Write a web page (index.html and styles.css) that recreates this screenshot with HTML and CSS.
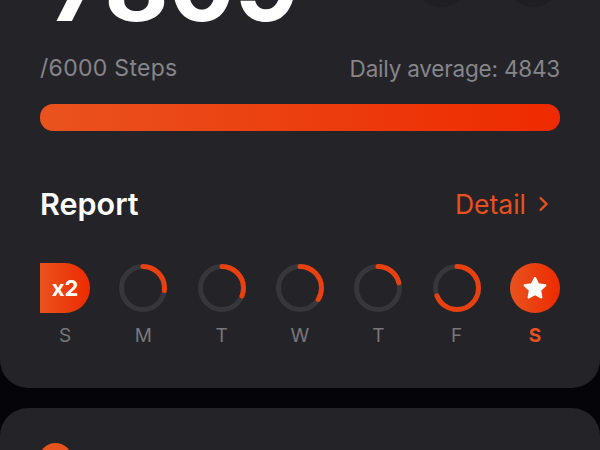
FILE: index.html
```html
<!DOCTYPE html>
<html lang="en">
<head>
    <meta charset="UTF-8">
    <title>Steps</title>
    <link rel="stylesheet" href="styles.css">
</head>
<body>
    <section class="card card-main">
        <div class="top">
            <div class="count">7809</div>
            <div class="actions">
                <div class="action"></div>
                <div class="action"></div>
            </div>
        </div>
        <div class="stats">
            <span class="goal">/6000 Steps</span>
            <span class="average">Daily average: 4843</span>
        </div>
        <div class="bar"></div>
        <div class="report-head">
            <h2>Report</h2>
            <div class="detail">
                Detail
                <svg width="12" height="16" viewBox="0 0 12 16"><path d="M1 1.500 7.500 8 1 14.500" fill="none" stroke="#e8501f" stroke-width="2.400"/></svg>
            </div>
        </div>
        <div class="days">
            <div class="day">
                <div class="badge badge-half">x2</div>
                <span>S</span>
            </div>
            <div class="day">
                <svg class="ring" viewBox="0 0 50 50"><circle class="track" cx="25" cy="25" r="21.500"/><circle class="fill" cx="25" cy="25" r="21.500" pathLength="100" stroke-dasharray="27 100"/></svg>
                <span>M</span>
            </div>
            <div class="day">
                <svg class="ring" viewBox="0 0 50 50"><circle class="track" cx="25" cy="25" r="21.500"/><circle class="fill" cx="25" cy="25" r="21.500" pathLength="100" stroke-dasharray="31 100"/></svg>
                <span>T</span>
            </div>
            <div class="day">
                <svg class="ring" viewBox="0 0 50 50"><circle class="track" cx="25" cy="25" r="21.500"/><circle class="fill" cx="25" cy="25" r="21.500" pathLength="100" stroke-dasharray="34 100"/></svg>
                <span>W</span>
            </div>
            <div class="day">
                <svg class="ring" viewBox="0 0 50 50"><circle class="track" cx="25" cy="25" r="21.500"/><circle class="fill" cx="25" cy="25" r="21.500" pathLength="100" stroke-dasharray="21 100"/></svg>
                <span>T</span>
            </div>
            <div class="day">
                <svg class="ring" viewBox="0 0 50 50"><circle class="track" cx="25" cy="25" r="21.500"/><circle class="fill" cx="25" cy="25" r="21.500" pathLength="100" stroke-dasharray="69 100"/></svg>
                <span>F</span>
            </div>
            <div class="day day-today">
                <div class="badge">
                    <svg width="26" height="26" viewBox="0 0 26 26"><path d="M13 2.800l3.200 6.500 7.200 1-5.200 5 1.200 7.200-6.400-3.400-6.400 3.400 1.200-7.200-5.200-5 7.200-1z" fill="#fff" stroke="#fff" stroke-width="2" stroke-linejoin="round"/></svg>
                </div>
                <span>S</span>
            </div>
        </div>
    </section>
    <section class="card card-next">
        <div class="dot"></div>
    </section>
</body>
</html>
```

FILE: styles.css
```css
html, body {
    height: 100%;
}

body {
    margin: 0;
    background: #050509;
    color: #fff;
    font-family: "Inter", "Liberation Sans", sans-serif;
    overflow: hidden;
}

.card {
    background: #242428;
}

.card-main {
    height: 388px;
    box-sizing: border-box;
    padding: 0 40px;
    border-radius: 0 0 28px 28px;
}

.top {
    height: 44px;
    display: flex;
    justify-content: space-between;
    align-items: flex-start;
}

.count {
    font-size: 99px;
    font-weight: 700;
    line-height: 76px;
    margin-top: -53px;
    margin-left: 8px;
}

.actions {
    display: flex;
    gap: 38px;
    margin-top: -47px;
}

.action {
    width: 54px;
    height: 54px;
    border-radius: 50%;
    background: #1f1f23;
}

.stats {
    display: flex;
    justify-content: space-between;
    height: 48px;
    margin-bottom: 12px;
    align-items: center;
    color: #85858a;
}

.goal {
    font-size: 23px;
    letter-spacing: 0.3px;
}

.average {
    font-size: 22.500px;
    letter-spacing: -0.2px;
}

.bar {
    height: 27px;
    border-radius: 13px;
    background: linear-gradient(90deg, #e9531e, #ee2a00);
}

.report-head {
    display: flex;
    justify-content: space-between;
    align-items: center;
    margin-top: 55px;
    margin-bottom: 41px;
    padding-right: 9px;
}

.report-head h2 {
    margin: 0;
    font-size: 30.500px;
    font-weight: 600;
    line-height: 36px;
}

.detail {
    display: flex;
    align-items: center;
    gap: 13px;
    font-size: 26.500px;
    color: #e8501f;
}

.days {
    display: flex;
    justify-content: space-between;
}

.day {
    display: flex;
    flex-direction: column;
    align-items: center;
    gap: 11px;
    width: 50px;
}

.day span {
    font-size: 19px;
    line-height: 24px;
    color: #77777c;
}

.day-today span {
    color: #e8501f;
    font-weight: 700;
}

.ring {
    width: 50px;
    height: 50px;
    transform: rotate(-90deg);
}

.ring circle {
    fill: none;
    stroke-width: 5;
}

.track {
    stroke: #36363b;
}

.fill {
    stroke: #e8400f;
    stroke-linecap: round;
}

.badge {
    width: 50px;
    height: 50px;
    border-radius: 50%;
    display: flex;
    align-items: center;
    justify-content: center;
    background: linear-gradient(90deg, #e9531e, #ee2a00);
    font-size: 22px;
    font-weight: 700;
}

.badge-half {
    border-radius: 0 25px 25px 0;
}

.card-next {
    height: 42px;
    margin-top: 20px;
    padding: 35px 39px 0;
    box-sizing: border-box;
    overflow: hidden;
    border-radius: 28px 28px 0 0;
}

.dot {
    width: 33px;
    height: 33px;
    border-radius: 50%;
    background: #e9531e;
}
```
